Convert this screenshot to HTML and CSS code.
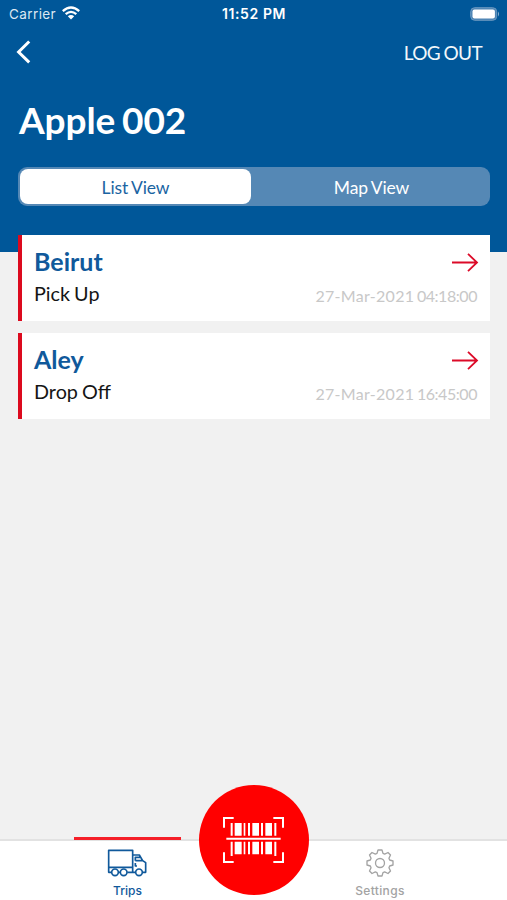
FILE: index.html
```html
<!DOCTYPE html>
<html lang="en">
<head>
<meta charset="utf-8">
<title>Trips</title>
<link rel="stylesheet" href="styles.css">
</head>
<body>
<div class="app">
  <header class="header">
    <div class="status">
      <div class="carrier"><span class="carrier-name">Carrier</span>
        <svg class="wifi" viewBox="0 0 18 14" width="18" height="14"><g fill="none" stroke="#fff" stroke-width="2.3"><path d="M.8 5.2Q9-2.2 17.2 5.2"/><path d="M3.7 8.2Q9 3.5 14.3 8.2"/></g><path fill="#fff" d="M5.8 10.3Q9 7.6 12.2 10.3L9 13.6Z"/></svg>
      </div>
      <span class="time">11:52 PM</span>
      <svg class="battery" viewBox="0 0 30 14" width="30" height="14"><rect x=".7" y=".7" width="26" height="12.6" rx="4" fill="#4c83b3" stroke="#6c99c0"/><rect x="2.5" y="2.5" width="22.4" height="9" rx="2" fill="#fff"/><path fill="#8db0cf" d="M28 4.5q2 2.5 0 5z"/></svg>
    </div>
    <nav class="nav">
      <svg class="back" viewBox="0 0 16 26" width="16" height="26"><path d="M13.2 2.5 2.6 13l10.6 10.3" fill="none" stroke="#fff" stroke-width="3"/></svg>
      <span class="logout">LOG OUT</span>
    </nav>
    <h1 class="title">Apple 002</h1>
    <div class="segments"><div class="segment active">List View</div><div class="segment">Map View</div></div>
  </header>
  <main class="list">
    <article class="card">
      <div class="row"><h2 class="city">Beirut</h2><svg class="arrow" viewBox="0 0 28 20" width="28" height="20"><path d="M1 10.5H26M17 1.9 26 10.5l-9 8.6" fill="none" stroke="#dc0a28" stroke-width="1.8"/></svg></div>
      <div class="row"><span class="kind">Pick Up</span><span class="date">27-Mar-2021 <span class="clock">04:18:00</span></span></div>
    </article>
    <article class="card">
      <div class="row"><h2 class="city">Aley</h2><svg class="arrow" viewBox="0 0 28 20" width="28" height="20"><path d="M1 10.5H26M17 1.9 26 10.5l-9 8.6" fill="none" stroke="#dc0a28" stroke-width="1.8"/></svg></div>
      <div class="row"><span class="kind">Drop Off</span><span class="date">27-Mar-2021 <span class="clock">16:45:00</span></span></div>
    </article>
  </main>
  <footer class="tabs">
    <div class="tab trips">
      <svg class="truck" viewBox="141 69 120 90" width="40" height="30"><g fill="none" stroke="#10599b" stroke-width="5" stroke-linejoin="round"><path d="M154 142H146V76H218V142H202M218 142H226M248 142H257V113L248 107 238 90H218M146 127H218M226 107V97H241M226 107H248M226 114V123H231"/><circle cx="165" cy="142" r="10"/><circle cx="191" cy="142" r="10"/><circle cx="237" cy="142" r="10"/><path d="M175 142H181"/></g></svg>
      <span class="tab-label">Trips</span>
    </div>
    <div class="scan">
      <svg viewBox="28 30 330 330" width="110" height="110"><g fill="none" stroke="#fff" stroke-width="6"><path d="M103 158V129H132M251 129H280V158M280 232V261H251M132 261H103V232"/><path d="M110 191H273"/></g><g fill="#fff"><path d="M123 144h6v38h-6zM135 144h21v38h-21zM162 144h5v38h-5zM175 144h6v38h-6zM188 144h20v38h-20zM214 144h6v38h-6zM227 144h20v38h-20zM254 144h6v38h-6z"/><path d="M123 200h6v43h-6zM135 200h21v38h-21zM162 200h5v38h-5zM175 200h6v38h-6zM188 200h20v38h-20zM214 200h6v38h-6zM227 200h20v38h-20zM254 200h6v43h-6z"/></g></svg>
    </div>
    <div class="tab settings">
      <svg viewBox="-45 -45 90 90" width="30" height="30"><g fill="none" stroke="#a3a3a3" stroke-width="4" stroke-linejoin="round"><path d="M-9-29-6-39H6L9-29 14.1-26.9 24-31.5 31.5-24 26.9-14.1 29-9 39-6V6L29 9 26.9 14.1 31.5 24 24 31.5 14.1 26.9 9 29 6 39H-6L-9 29-14.1 26.9-24 31.5-31.5 24-26.9 14.1-29 9-39 6V-6L-29-9-26.9-14.1-31.5-24-24-31.5-14.1-26.9Z"/><circle r="13.5"/></g></svg>
      <span class="tab-label">Settings</span>
    </div>
  </footer>
</div>
</body>
</html>
```
FILE: styles.css
```css
* { box-sizing: border-box; }
body { margin: 0; background: #f1f1f1; font-family: Lato, sans-serif; }
svg { display: block; flex: none; }
h1, h2 { margin: 0; }
.app { height: 900px; display: flex; flex-direction: column; overflow: hidden; }
.header { height: 252px; flex: none; background: #005799; color: #fff; padding: 0 17px 0 18px; }
.status { height: 27px; display: grid; grid-template-columns: 1fr auto 1fr; align-items: center; margin: 0 -9px; font-family: Inter, sans-serif; font-size: 13.5px; }
.carrier { display: flex; align-items: center; gap: 6px; color: #dce8f2; }
.carrier-name { letter-spacing: .4px; }
.wifi { margin-top: -2px; }
.time { font-weight: 600; font-size: 14px; letter-spacing: .6px; }
.battery { justify-self: end; margin-right: -1px; }
.nav { height: 52px; display: flex; justify-content: space-between; align-items: center; padding-right: 8px; }
.back { margin: -2px 0 0 -2px; }
.logout { font-size: 19px; color: #f2f7fb; letter-spacing: -.6px; word-spacing: -1px; margin: -2px 0 0 0; }
.title { height: 84px; line-height: 81px; font-size: 37px; font-weight: 700; letter-spacing: -.1px; word-spacing: -2px; white-space: nowrap; padding-left: 1px; }
.segments { height: 39px; margin-top: 4px; border-radius: 9px; background: #5588b5; padding: 2px; display: flex; }
.segment { flex: 1; display: flex; align-items: center; justify-content: center; font-size: 17.5px; letter-spacing: -.15px; word-spacing: -.7px; padding: 1px 0 0 4px; }
.active { flex: 0 0 231px; background: #fff; color: #1b64a2; border-radius: 8px; padding-left: 0; }
.list { flex: 1; margin-top: -17px; padding: 0 17px 0 18px; display: flex; flex-direction: column; gap: 12px; }
.card { height: 86px; background: #fff; border-left: 4px solid #dc0a1e; padding: 9px 11px 0 12px; }
.row { display: flex; justify-content: space-between; align-items: center; height: 35px; }
.row + .row { height: 30px; }
.city { color: #10599b; font-size: 25px; line-height: 35px; font-weight: 700; }
.kind { color: #151515; font-size: 19.8px; word-spacing: -1px; margin-top: -3px; }
.date { color: #c8c8c8; font-size: 16px; letter-spacing: .3px; margin: 2px 2px 0 0; word-spacing: -1.8px; }
.clock { letter-spacing: -.45px; }
.tabs { height: 61px; flex: none; background: #fff; border-top: 2px solid #e2e2e2; display: grid; grid-template-columns: 199px 110px 1fr; }
.tab { display: flex; flex-direction: column; align-items: center; font-family: Inter, sans-serif; font-size: 12px; font-weight: 500; }
.trips { width: 107px; margin-left: 74px; margin-top: -4px; border-top: 3px solid #f51f28; padding-top: 8px; color: #10599b; }
.truck { margin-right: 2px; }
.settings { width: 142px; padding-top: 7px; color: #a3a3a3; }
.tab-label { line-height: 16px; margin-top: 5px; }
.settings .tab-label { letter-spacing: .35px; }
.scan { width: 110px; height: 110px; margin-top: -56px; border-radius: 50%; background: #f00; }
```
